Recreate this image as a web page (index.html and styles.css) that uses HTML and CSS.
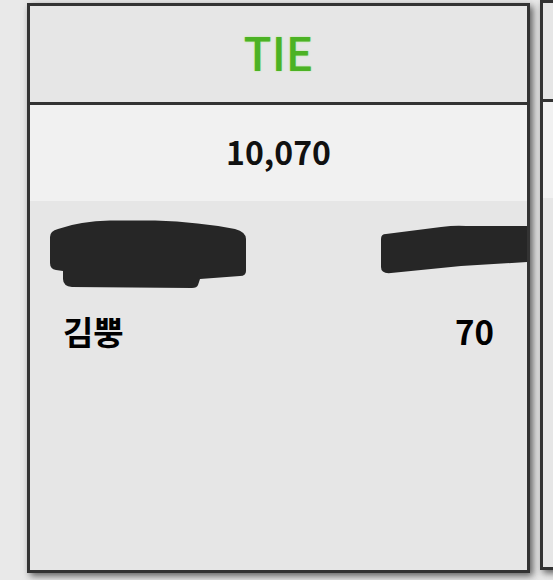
FILE: index.html
```html
<!DOCTYPE html>
<html lang="ko">
<head>
    <meta charset="UTF-8">
    <meta name="viewport" content="width=device-width, initial-scale=1.0">
    <title>Result</title>
    <link rel="stylesheet" href="styles.css">
</head>
<body>
    <div class="board">
        <div class="card">
            <div class="card-head tie">TIE</div>
            <div class="card-score">10,070</div>
            <div class="card-list">
                <!-- hidden row -->
                <div class="row row-hidden">
                    <svg class="mask-left" width="197" height="70" viewBox="0 0 197 70">
                        <path d="M0 18 Q0 12 8 10 Q30 2 60 1.5 L105 1.5 Q150 3 185 10 Q196 13 196 20 L196 52 Q196 57 190 57 L150 60 L148 66 Q147 69 142 69 L22 68 Q13 67 13 60 L13 52 L6 51 Q0 50 0 44 Z" fill="#262626"/>
                    </svg>
                    <svg class="mask-right" width="146" height="49" viewBox="0 0 146 49">
                        <path d="M0 14 Q0 9 5 9 L60 2 Q75 0 85 1 L146 1 L146 37 L80 41 L10 48 Q0 49 0 42 Z" fill="#262626"/>
                    </svg>
                </div>
                <div class="row">
                    <span class="name">김뿡</span>
                    <span class="points">70</span>
                </div>
            </div>
        </div>
        <div class="card card-next">
            <div class="card-head"></div>
            <div class="card-score"></div>
            <div class="card-list"></div>
        </div>
    </div>
</body>
</html>
```

FILE: styles.css
```css
body {
    margin: 0;
    background-color: #e9e9e9;
    font-family: "Noto Sans CJK KR", "Noto Sans", sans-serif;
}
.board {
    display: flex;
    gap: 10px;
    padding: 3px 0 10px 27px;
    height: 567px;
    overflow: hidden;
}
.card {
    width: 497px;
    height: 564px;
    flex-shrink: 0;
    background-color: #e6e6e6;
    border: 3px solid #333;
    box-shadow: 3px 3px 7px rgba(0, 0, 0, 0.6);
    display: flex;
    flex-direction: column;
    overflow: hidden;
}
.card-next {
    margin-top: -3px;
}
.card-head {
    height: 96px;
    border-bottom: 3px solid #333;
    display: flex;
    justify-content: center;
    align-items: center;
    font-size: 46px;
    font-weight: 500;
}
.tie {
    color: #4cb224;
    text-shadow: 0 0 2px #a6ec86;
    height: 90px;
    padding-bottom: 6px;
}
.card-score {
    height: 92px;
    padding-bottom: 4px;
    background-color: #f1f1f1;
    display: flex;
    justify-content: center;
    align-items: center;
    font-size: 32px;
    font-weight: 700;
    color: #111;
}
.card-list {
    padding-top: 18px;
}
.row {
    display: flex;
    justify-content: space-between;
    align-items: center;
    padding: 0 33px;
    height: 40px;
    font-size: 33px;
    font-weight: 700;
    color: #000;
}
.row-hidden {
    height: 70px;
    padding: 0 0 0 20px;
    align-items: flex-start;
    margin-bottom: 22px;
}
.mask-right {
    margin-top: 6px;
}
```
